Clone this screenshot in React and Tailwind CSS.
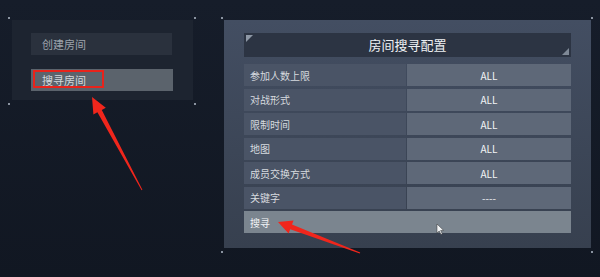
const ROWS = [
  { label: '参加人数上限', value: 'ALL' },
  { label: '对战形式', value: 'ALL' },
  { label: '限制时间', value: 'ALL' },
  { label: '地图', value: 'ALL' },
  { label: '成员交换方式', value: 'ALL' },
  { label: '关键字', value: '----' },
]

function Dot({ className }) {
  return <span className={`absolute h-[2px] w-[2px] bg-[#8a93a0] ${className}`} />
}

function Overlay() {
  return (
    <svg className="pointer-events-none absolute inset-0" width="600" height="277" viewBox="0 0 600 277">
      <polygon
        points="142.4,189.8 101.8,109.9 105.8,107.8 92,97 93.4,114.4 97.4,112.3 141.6,190.2"
        fill="#f0261c"
      />
      <polygon
        points="360.2,252.4 292,224.6 293.6,220.4 278,222 288.6,233.5 290.2,229.2 359.8,253.6"
        fill="#f0261c"
      />
      <path d="M437 224 L437 233 L439.2 231 L441 234.5 L442.3 233.8 L440.6 230.5 L443.5 230.3 Z" fill="#f2f4f6" stroke="#333" strokeWidth="0.5" />
    </svg>
  )
}

export default function App() {
  return (
    <div
      className="relative flex h-[277px] w-[600px] items-start overflow-hidden bg-gradient-to-b from-[#161d2a] to-[#111722] pt-[20px] pl-[12px]"
      style={{ fontFamily: '"Noto Sans CJK SC", "Noto Sans", sans-serif' }}
    >
      {/* left menu */}
      <div className="flex h-[80px] w-[181px] flex-col gap-[14px] bg-[#1d2430] pt-[13px] pl-[19px]">
        <div className="flex h-[22px] w-[141px] items-center bg-[#2a313d] pl-[11px] text-[11px] text-[#9ca3ac]">
          创建房间
        </div>
        <div className="relative flex h-[22px] w-[142px] items-center bg-[#5b636c] pl-[11px] text-[11px] text-[#d4d8dc]">
          搜寻房间
          <span className="absolute top-[1px] left-[2px] h-[18px] w-[71px] border-2 border-[#e8231b]" />
        </div>
      </div>

      {/* right config panel */}
      <div className="ml-[31px] flex h-[228px] w-[367px] flex-col bg-gradient-to-b from-[#434e62] to-[#37404f] px-[20px] pt-[13px]">
        <div className="relative flex h-[24px] items-center justify-center bg-[#2c3443] text-[13px] text-[#eef0f3]">
          <span className="absolute top-[2px] left-[2px] h-0 w-0 border-t-[7px] border-r-[7px] border-t-[#8e98a6] border-r-transparent" />
          房间搜寻配置
          <span className="absolute right-[2px] bottom-[2px] h-0 w-0 border-b-[7px] border-l-[7px] border-b-[#7f8997] border-l-transparent" />
        </div>
        <div className="mt-[7px] flex flex-col gap-[2.5px]">
          {ROWS.map((row) => (
            <div key={row.label} className="flex h-[22px] gap-[1px]">
              <div className="flex w-[162px] items-center bg-[#4a5466] pl-[6px] text-[10px] text-[#d6dadf]">
                {row.label}
              </div>
              <div className="flex flex-1 items-center justify-center bg-[#5e6878] text-[10px] text-[#f2f4f6]">
                {row.value}
              </div>
            </div>
          ))}
          <div className="flex h-[22px] items-center bg-[#7b858f] pl-[6px] text-[10px] text-[#f2f4f6]">
            搜寻
          </div>
        </div>
      </div>

      <Dot className="top-[17px] left-[8px]" />
      <Dot className="top-[17px] left-[194px]" />
      <Dot className="top-[103px] left-[8px]" />
      <Dot className="top-[103px] left-[194px]" />
      <Dot className="top-[17px] left-[221px]" />
      <Dot className="top-[17px] left-[591px]" />
      <Dot className="top-[251px] left-[221px]" />
      <Dot className="top-[251px] left-[591px]" />

      <Overlay />
    </div>
  )
}
